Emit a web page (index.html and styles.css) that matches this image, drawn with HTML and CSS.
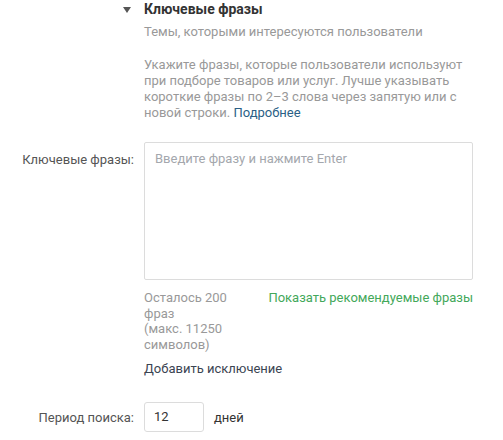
FILE: index.html
```html
<!DOCTYPE html>
<html lang="ru">
<head>
<meta charset="utf-8">
<link rel="stylesheet" href="styles.css">
</head>
<body>
<div class="page">
  <div class="row head">
    <div class="label"><span class="tri"></span></div>
    <div class="content">
      <div class="title">Ключевые фразы</div>
      <div class="subtitle">Темы, которыми интересуются пользователи</div>
      <p class="desc">Укажите фразы, которые пользователи используют при подборе товаров или услуг. Лучше указывать короткие фразы по 2–3 слова через запятую или с новой строки. <a class="more" href="#">Подробнее</a></p>
    </div>
  </div>
  <div class="row phrases">
    <div class="label lbl-top">Ключевые фразы:</div>
    <div class="content">
      <div class="textarea"><span class="placeholder">Введите фразу и нажмите Enter</span></div>
      <div class="under">
        <div class="counter">
          <div>Осталось 200 фраз</div>
          <div>(макс. 11250 символов)</div>
        </div>
        <a class="recommend" href="#">Показать рекомендуемые фразы</a>
      </div>
      <a class="exclude" href="#">Добавить исключение</a>
    </div>
  </div>
  <div class="row period">
    <div class="label lbl-mid">Период поиска:</div>
    <div class="content inline">
      <div class="num">12</div>
      <span class="unit">дней</span>
    </div>
  </div>
</div>
</body>
</html>
```
FILE: styles.css
```css
html, body {
  margin: 0;
  padding: 0;
  background: #fff;
}
body {
  font-family: Roboto, "Liberation Sans", Arial, sans-serif;
  font-size: 13px;
  color: #333;
}
.page {
  width: 503px;
}
.row {
  display: grid;
  grid-template-columns: 134px 329px;
  column-gap: 10px;
}
.label {
  text-align: right;
  color: #555;
}
.tri {
  display: inline-block;
  width: 0;
  height: 0;
  border-left: 4px solid transparent;
  border-right: 4px solid transparent;
  border-top: 6px solid #555;
  margin-right: 3px;
  margin-top: 6px;
}
.head .label {
  line-height: 18px;
}
.title {
  font-size: 14px;
  font-weight: bold;
  color: #333;
  line-height: 18px;
}
.subtitle {
  color: #999;
  line-height: 16px;
  margin-top: 6px;
}
.desc {
  color: #999;
  line-height: 16px;
  margin: 17px 0 0 0;
}
.more {
  color: #2b5f86;
  text-decoration: none;
}
.phrases {
  margin-top: 21px;
}
.lbl-top {
  padding-top: 10px;
  line-height: 16px;
}
.textarea {
  box-sizing: border-box;
  height: 138px;
  border: 1px solid #dcdcdc;
  border-radius: 2px;
  padding: 8px 10px;
  line-height: 16px;
}
.placeholder {
  color: #a4a7ad;
}
.under {
  display: flex;
  justify-content: space-between;
  margin-top: 10px;
}
.counter {
  width: 96px;
  color: #999;
  line-height: 15.5px;
}
.recommend {
  color: #43a85a;
  text-decoration: none;
  line-height: 15.5px;
}
.exclude {
  display: block;
  margin-top: 9px;
  color: #3b4452;
  text-decoration: none;
  line-height: 16px;
}
.period {
  margin-top: 25px;
  align-items: center;
}
.inline {
  display: flex;
  align-items: center;
  gap: 10px;
}
.num {
  box-sizing: border-box;
  width: 60px;
  height: 30px;
  border: 1px solid #dcdcdc;
  border-radius: 3px;
  padding: 0 9px;
  line-height: 28px;
  color: #333;
}
.unit {
  color: #333;
}
```
